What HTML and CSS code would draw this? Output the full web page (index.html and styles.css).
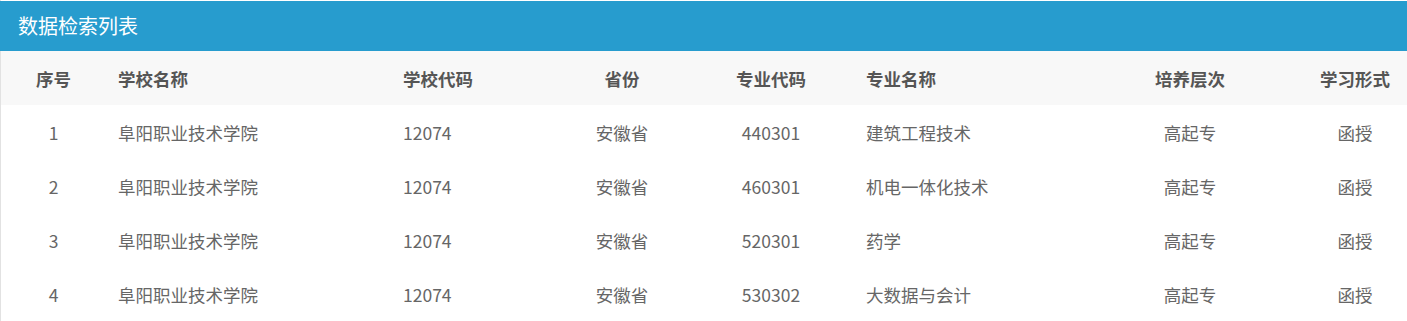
FILE: index.html
```html
<!DOCTYPE html>
<html lang="zh-CN">
<head>
<meta charset="utf-8">
<title>数据检索列表</title>
<link rel="stylesheet" href="styles.css">
</head>
<body>
<div class="panel">
  <div class="panel-title">数据检索列表</div>
  <table class="grid">
    <colgroup>
      <col class="c1"><col class="c2"><col class="c3"><col class="c4"><col class="c5"><col class="c6"><col class="c7"><col class="c8">
    </colgroup>
    <thead>
      <tr>
        <th class="center">序号</th>
        <th>学校名称</th>
        <th>学校代码</th>
        <th class="center">省份</th>
        <th class="center">专业代码</th>
        <th>专业名称</th>
        <th class="center">培养层次</th>
        <th class="center">学习形式</th>
      </tr>
    </thead>
    <tbody>
      <tr>
        <td class="center">1</td><td>阜阳职业技术学院</td><td>12074</td><td class="center">安徽省</td><td class="center">440301</td><td>建筑工程技术</td><td class="center">高起专</td><td class="center">函授</td>
      </tr>
      <tr>
        <td class="center">2</td><td>阜阳职业技术学院</td><td>12074</td><td class="center">安徽省</td><td class="center">460301</td><td>机电一体化技术</td><td class="center">高起专</td><td class="center">函授</td>
      </tr>
      <tr>
        <td class="center">3</td><td>阜阳职业技术学院</td><td>12074</td><td class="center">安徽省</td><td class="center">520301</td><td>药学</td><td class="center">高起专</td><td class="center">函授</td>
      </tr>
      <tr>
        <td class="center">4</td><td>阜阳职业技术学院</td><td>12074</td><td class="center">安徽省</td><td class="center">530302</td><td>大数据与会计</td><td class="center">高起专</td><td class="center">函授</td>
      </tr>
    </tbody>
  </table>
</div>
</body>
</html>
```
FILE: styles.css
```css
html, body {
  margin: 0;
  padding: 0;
  background: #ffffff;
}
body {
  font-family: "Noto Sans CJK SC", "Noto Sans", sans-serif;
  color: #666666;
}
.panel {
  padding-top: 1px;
  border-left: 1px solid #e2e2e2;
}
.panel-title {
  background: #279cce;
  color: #ffffff;
  font-size: 20px;
  height: 50px;
  line-height: 50px;
  padding-left: 18px;
  margin-left: -1px;
}
.grid {
  width: 1406px;
  border-collapse: collapse;
  table-layout: fixed;
}
.c1 { width: 105px; }
.c2 { width: 285px; }
.c3 { width: 165px; }
.c4 { width: 132px; }
.c5 { width: 166px; }
.c6 { width: 223px; }
.c7 { width: 226px; }
.c8 { width: 104px; }
.grid th, .grid td {
  height: 54px;
  padding: 0 0 0 12px;
  text-align: left;
  font-size: 17.5px;
  white-space: nowrap;
}
.grid th {
  background: #f8f8f8;
  color: #555555;
  font-weight: bold;
}
.grid td {
  color: #666666;
}
.grid .center {
  text-align: center;
  padding: 0;
}
```
